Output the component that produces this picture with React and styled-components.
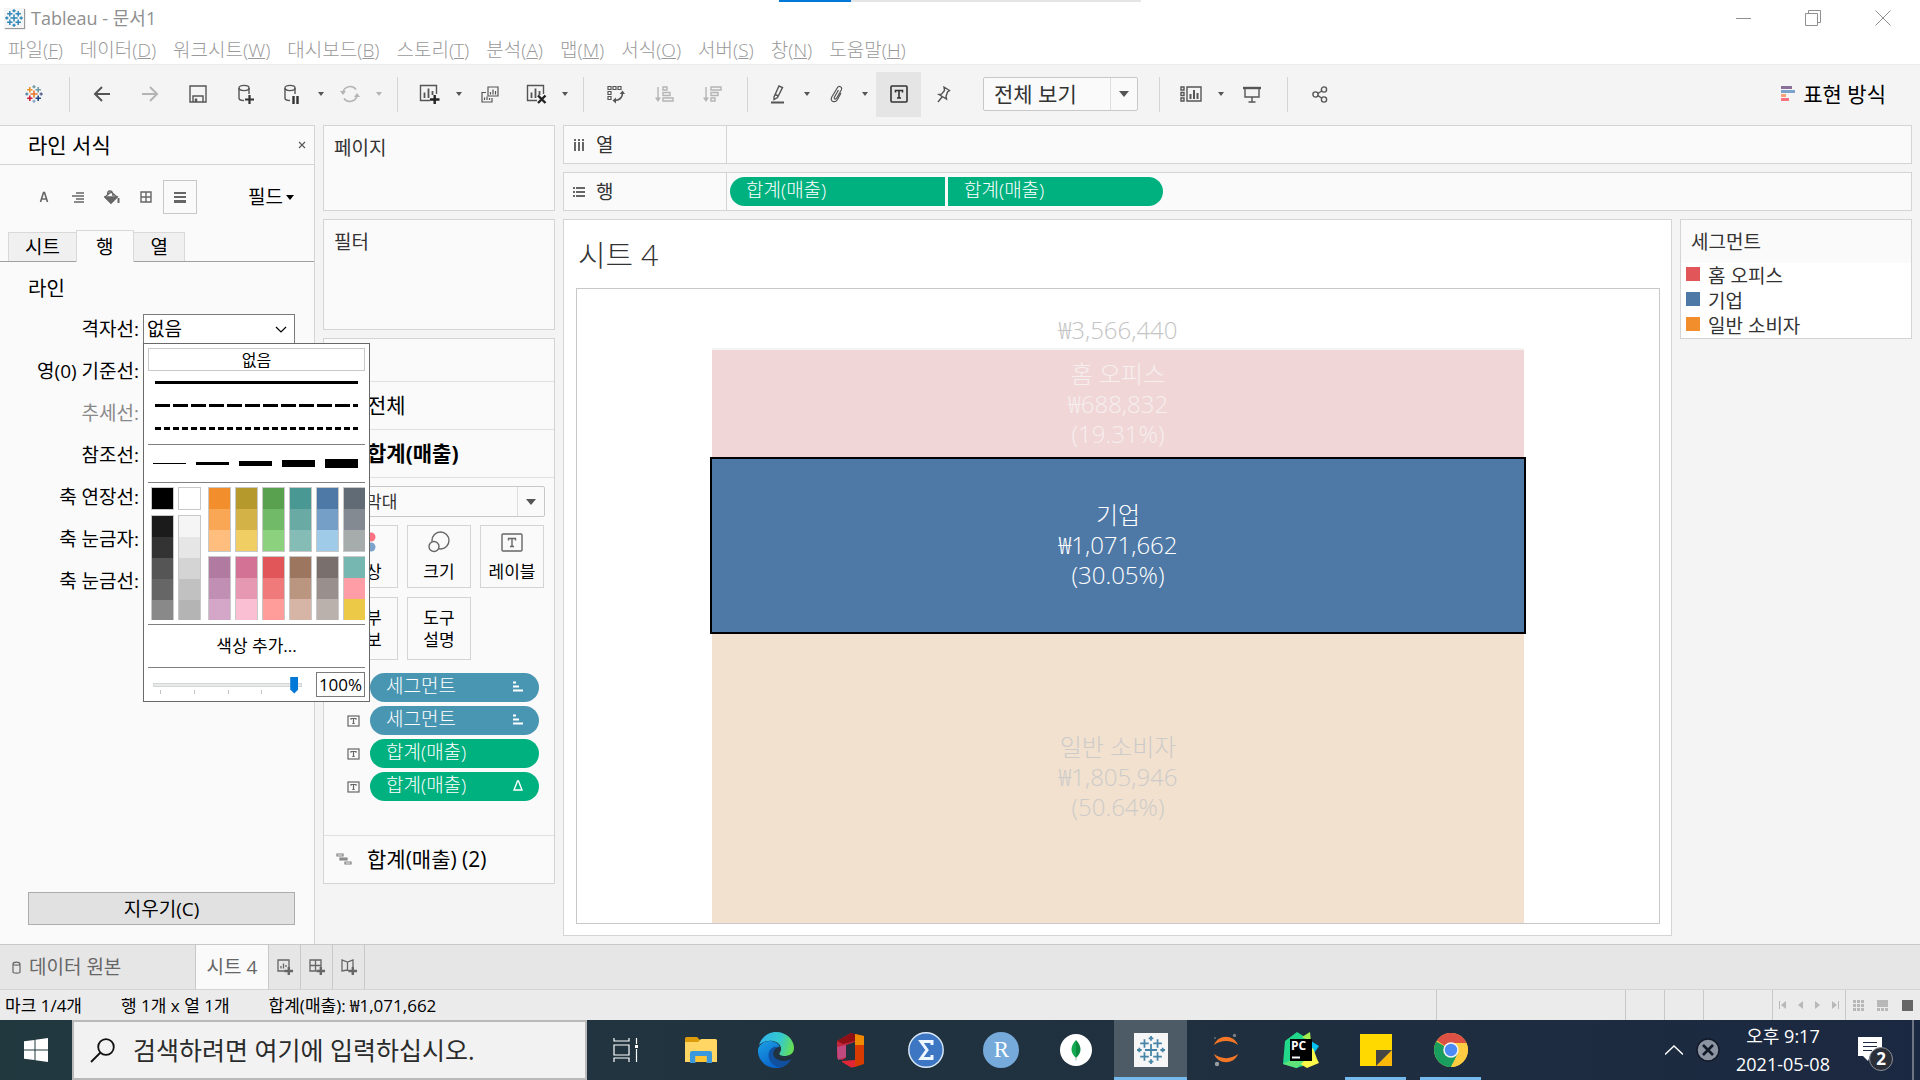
import React from 'react'
import styled, { createGlobalStyle, css } from 'styled-components'

const colors = {
    chrome: '#f4f4f4',
    card: '#fafafa',
    line: '#d4d4d4',
    icon: '#666666',
    faint: '#b4b4b4',
    green: '#00b180',
    blue: '#4996b2',
}

const GlobalStyle = createGlobalStyle`
    * {
        box-sizing: border-box;
    }

    body {
        margin: 0;
        font-family: "Open Sans", "Noto Sans CJK KR", sans-serif;
        font-size: 19px;
        line-height: 24px;
        color: #000;
        background: ${colors.chrome};
    }

    button, input, select {
        margin: 0;
        padding: 0;
        border: 0;
        border-radius: 0;
        background: none;
        color: inherit;
        font: inherit;
    }

    svg {
        display: block;
        flex: none;
    }
`

const Window = styled.div`
    display: flex;
    flex-direction: column;
    min-height: 100vh;
`

/* ---------- title and menu ---------- */

const TitleBar = styled.header`
    position: relative;
    display: flex;
    align-items: center;
    height: 36px;
    padding: 0 2px 0 4px;
    background: #fff;
    color: #8f8f8f;
    font-size: 18px;
`

const TitleIcon = styled.span`
    display: grid;
    place-items: center;
    width: 20px;
    height: 20px;
    margin-right: 7px;
    background: #f5f5f5;
    box-shadow: 1px 1px 1px #999;
`

const WindowButtons = styled.div`
    display: flex;
    margin-left: auto;
`

const WindowButton = styled.button`
    display: grid;
    place-items: center;
    width: 70px;
    height: 33px;
`

const Loading = styled.div`
    position: absolute;
    top: 0;
    left: 779px;
    width: 362px;
    height: 2px;
    background: linear-gradient(to right, #0078d7 72px, #e5e5e5 72px);
`

const MenuBar = styled.nav`
    display: flex;
    align-items: center;
    gap: 17px;
    height: 28px;
    padding: 0 8px;
    background: #fff;
    color: #999;
    font-size: 19px;
    white-space: nowrap;
`

const MenuItem = styled.button`
    font-weight: 300;
`

/* ---------- toolbar ---------- */

const Toolbar = styled.div`
    display: flex;
    align-items: center;
    height: 61px;
    padding: 0 34px 2px 10px;
    border-top: 1px solid #ececec;
    background: ${colors.chrome};
`

const Tool = styled.button`
    display: grid;
    place-items: center;
    flex: none;
    width: ${props => props.$w || 48}px;
    height: 45px;
    margin-left: ${props => props.$gap || 0}px;
    background: ${props => props.$active ? '#e5e5e5' : 'none'};
    color: ${props => props.$off ? colors.faint : '#555'};
`

const Divider = styled.span`
    flex: none;
    width: 1px;
    height: 35px;
    margin: 0 8px 0 ${props => props.$gap || 11}px;
    background: ${colors.line};
`

const ShowMe = styled.button`
    display: flex;
    align-items: center;
    gap: 8px;
    margin-left: auto;
    font-size: 21px;
`

const SelectBox = styled.div`
    display: grid;
    grid-template-columns: 1fr 27px;
    width: ${props => props.$w};
    height: ${props => props.$h}px;
    margin-left: ${props => props.$gap || 0}px;
    border: 1px solid #c8c8c8;
    border-radius: 2px;
    background: ${colors.card};
`

const Select = styled.select`
    grid-area: 1 / 1 / 2 / 3;
    appearance: none;
    width: 100%;
    height: 100%;
    padding-left: ${props => props.$pad}px;
    outline: none;
    color: ${props => props.$dark ? '#000' : '#333'};
    font-size: ${props => props.$size}px;
`

const SelectArrow = styled.span`
    grid-area: 1 / 2 / 2 / 3;
    display: grid;
    place-items: center;
    border-left: 1px solid ${props => props.$plain ? 'transparent' : '#dedede'};
    pointer-events: none;
`

/* ---------- workspace ---------- */

const Workspace = styled.div`
    display: flex;
    flex: 1;
    gap: 8px;
    padding-right: 8px;
`

const FormatPane = styled.aside`
    position: relative;
    z-index: 2;
    display: flex;
    flex-direction: column;
    flex: none;
    width: 315px;
    border-top: 1px solid ${colors.line};
    border-right: 1px solid ${colors.line};
    background: ${colors.card};
`

const PaneHeader = styled.div`
    display: flex;
    align-items: center;
    justify-content: space-between;
    height: 39px;
    padding: 0 6px 0 28px;
    border-bottom: 1px solid ${colors.line};
    font-size: 21px;
`

const FormatTools = styled.div`
    display: flex;
    align-items: center;
    padding: 15px 20px 16px 27px;
`

const FormatTool = styled.button`
    display: grid;
    place-items: center;
    width: 34px;
    height: 34px;
    border: 1px solid ${props => props.$active ? '#c8c8c8' : 'transparent'};
    color: ${colors.icon};
`

const FieldButton = styled.button`
    display: flex;
    align-items: center;
    gap: 3px;
    margin-left: auto;
    font-size: 19px;
`

const Tabs = styled.div`
    display: flex;
    align-items: flex-end;
    height: 32px;
    padding-left: 8px;
    border-bottom: 1px solid #a0a0a0;
`

const Tab = styled.button`
    height: 29px;
    padding: 0 16px;
    border: 1px solid #d9d9d9;
    border-bottom: 0;
    border-left-width: ${props => props.$last ? 0 : 1}px;
    background: #f0f0f0;

    ${props => props.$active && css`
        height: 32px;
        margin: 0 0 -1px -1px;
        padding: 0 20px 0 19px;
        background: ${colors.card};
    `}
`

const SectionTitle = styled.h2`
    margin: 15px 0 7px 28px;
    font-size: 20px;
    font-weight: 400;
    line-height: 24px;
`

const FormatRow = styled.div`
    display: grid;
    grid-template-columns: 139px 152px;
    align-items: center;
    gap: 4px;
    height: 42px;
    text-align: right;
    color: ${props => props.$off ? '#8a8a8a' : '#000'};
`

const Combo = styled.div`
    position: relative;

    ${SelectBox} {
        border-color: #7a7a7a;
        border-radius: 0;
        background: #fff;
    }
`

const ClearButton = styled.button`
    height: 33px;
    margin: auto 19px 19px 28px;
    border: 1px solid #adadad;
    background: #e1e1e1;
    font-size: 19px;
`

/* ---------- line popup ---------- */

const Popup = styled.div`
    position: absolute;
    top: 29px;
    left: 0;
    width: 227px;
    padding: 4px;
    border: 1px solid #696969;
    background: #fff;
    color: #000;
    text-align: center;
    font-size: 17px;
`

const NoneOption = styled.button`
    display: block;
    width: 100%;
    height: 23px;
    border: 1px solid #c8c8c8;
    font-size: 16px;
    line-height: 20px;
`

const LineOption = styled.button`
    display: block;
    width: 100%;
    height: 23px;
    padding: 0 7px;

    &::before {
        content: '';
        display: block;
        height: 3px;
        background: repeating-linear-gradient(to right, #000 0 ${props => props.$dash}px, #fff ${props => props.$dash}px ${props => props.$period}px);
    }
`

const Rule = styled.hr`
    height: 1px;
    margin: ${props => props.$gap || 0}px 0 0;
    border: 0;
    background: #808080;
`

const Widths = styled.div`
    display: flex;
    align-items: center;
    gap: 10px;
    height: 37px;
    padding: 0 5px;
`

const WidthOption = styled.button`
    width: 33px;
    height: ${props => props.$size}px;
    background: #000;
`

const Palette = styled.div`
    display: flex;
    gap: 4px;
    height: 133px;
    margin: 4px 0;
    padding-left: 3px;
    overflow: hidden;
`

const PaletteColumn = styled.div`
    display: flex;
    flex: none;
    flex-direction: column;
    gap: ${props => props.$gray ? 5 : 4}px;
    margin-left: ${props => props.$apart ? 3 : 0}px;
`

const Ramp = styled.div`
    width: 23px;
    border: 1px solid #c8c8c8;
`

const Swatch = styled.button`
    display: block;
    width: 100%;
    height: 21px;
    background: ${props => props.$color};
`

const MoreColors = styled.button`
    width: 100%;
    height: 42px;
`

const OpacityRow = styled.div`
    display: flex;
    justify-content: space-between;
    height: 29px;
    padding: 4px 0 0 5px;
`

const Opacity = styled.input`
    appearance: none;
    display: block;
    width: 149px;
    height: 17px;
    margin-top: 4px;

    &::-webkit-slider-runnable-track {
        height: 4px;
        border: 1px solid #d6d6d6;
        background: #e7eaea;
    }

    &::-webkit-slider-thumb {
        appearance: none;
        width: 8px;
        height: 17px;
        margin-top: -7px;
        background: #0078d7;
        clip-path: polygon(0 0, 100% 0, 100% 76%, 50% 100%, 0 76%);
    }
`

const Ticks = styled.div`
    display: flex;
    justify-content: space-between;
    width: 136px;
    height: 4px;
    margin: -3px 0 0 7px;

    span {
        width: 1px;
        background: #c4c4c4;
    }

    span:last-child {
        background: none;
    }
`

const Percent = styled.input`
    width: 49px;
    height: 25px;
    border: 1px solid #7a7a7a;
    text-align: center;
    font-size: 17px;
`

/* ---------- shelves and marks ---------- */

const Shelves = styled.div`
    display: flex;
    flex: none;
    flex-direction: column;
    gap: 8px;
    width: 232px;
`

const Card = styled.section`
    min-height: ${props => props.$h}px;
    padding: 10px;
    border: 1px solid ${colors.line};
    background: ${colors.card};
    color: #333;
    font-size: 19px;
`

const Marks = styled(Card)`
    display: flex;
    flex-direction: column;
    padding: 42px 0 0;
    color: #000;
`

const MarksRow = styled.button`
    display: flex;
    align-items: center;
    gap: 15px;
    width: 100%;
    height: 48px;
    padding: 0 0 2px ${props => props.$icon ? 12 : 43}px;
    border-top: 1px solid #e0e0e0;
    text-align: left;
    font-size: 21px;
    font-weight: ${props => props.$bold ? 700 : 400};
`

const MarksBody = styled.div`
    padding: 8px 9px 30px 10px;
    border-top: 1px solid #e0e0e0;
`

const MarkButtons = styled.div`
    display: grid;
    grid-template-columns: repeat(3, 64px);
    gap: 9px;
    margin: 8px 0 13px;
`

const MarkButton = styled.button`
    display: flex;
    flex-direction: column;
    align-items: center;
    justify-content: center;
    gap: 8px;
    height: 63px;
    border: 1px solid ${colors.line};
    font-size: 17px;
    line-height: 22px;
`

const MarkField = styled.div`
    display: flex;
    align-items: center;
    gap: 10px;
    margin: 0 6px 4px 13px;
`

const Pill = styled.button`
    display: flex;
    align-items: center;
    justify-content: space-between;
    flex: ${props => props.$w ? `0 0 ${props.$w}px` : 1};
    height: 29px;
    padding: 0 16px 3px;
    border-radius: ${props => props.$round || '15px'};
    background: ${props => props.$color};
    color: #fff;
    font-size: 19px;
    font-weight: 300;
`

/* ---------- view ---------- */

const Main = styled.main`
    display: flex;
    flex: 1;
    flex-direction: column;
    gap: 8px;
    padding-bottom: 8px;
`

const Shelf = styled.div`
    display: flex;
    height: 39px;
    border: 1px solid ${colors.line};
    background: ${colors.card};
`

const ShelfName = styled.div`
    display: flex;
    align-items: center;
    gap: 11px;
    width: 163px;
    padding-left: 9px;
    border-right: 1px solid ${colors.line};
    color: #333;
    font-size: 19px;
`

const ShelfFields = styled.div`
    display: flex;
    align-items: center;
    gap: 3px;
    padding-left: 3px;
`

const ViewRow = styled.div`
    display: flex;
    align-items: flex-start;
    flex: 1;
    gap: 8px;
`

const Sheet = styled.section`
    display: flex;
    flex: 1;
    flex-direction: column;
    align-self: stretch;
    padding: 17px 11px 11px 12px;
    border: 1px solid ${colors.line};
    background: #fff;
`

const SheetTitle = styled.h1`
    margin: 0 0 15px 2px;
    color: #333;
    font-size: 30px;
    font-weight: 300;
    line-height: 36px;
`

const Chart = styled.div`
    display: flex;
    flex: 1;
    flex-direction: column;
    align-items: center;
    border: 1px solid #c8c8c8;
    font-size: 24px;
    font-weight: 300;
    line-height: 30px;
    text-align: center;
`

const Total = styled.div`
    padding: 26px 0 3px;
    color: #c4c4c4;
`

const Bar = styled.div`
    display: flex;
    flex-direction: column;
    justify-content: center;
    flex-basis: 0;
    width: 75%;
    background: ${props => props.$fill};
    color: ${props => props.$text};
    outline: ${props => props.$selected ? '2px solid #000' : 'none'};
    z-index: ${props => props.$selected ? 1 : 0};
    box-shadow: ${props => props.$first ? 'inset 0 2px #f4f4f4' : 'none'};
`

const Legend = styled.section`
    width: 232px;
    border: 1px solid ${colors.line};
    background: #fff;
    color: #333;
    font-size: 19px;
`

const LegendTitle = styled.div`
    height: 43px;
    padding: 10px;
    background: ${colors.card};
`

const LegendItem = styled.div`
    display: flex;
    align-items: center;
    gap: 8px;
    height: 25px;
    padding-left: 5px;

    &::before {
        content: '';
        width: 14px;
        height: 14px;
        margin-bottom: 3px;
        background: ${props => props.$color};
    }
`

/* ---------- sheet tabs and status ---------- */

const SheetTabs = styled.div`
    display: flex;
    height: 45px;
    border-top: 1px solid #c8c8c8;
    background: #e6e6e6;
    color: #666;
`

const SheetTab = styled.button`
    display: flex;
    align-items: center;
    justify-content: ${props => props.$start ? 'flex-start' : 'center'};
    gap: 8px;
    width: ${props => props.$w}px;
    padding-left: ${props => props.$start ? 12 : 0}px;
    border-right: 1px solid #c8c8c8;
    background: ${props => props.$active ? colors.card : 'none'};
`

const StatusBar = styled.footer`
    display: flex;
    gap: 39px;
    height: 31px;
    padding-left: 5px;
    border-top: 1px solid ${colors.line};
    background: #ebebeb;
    font-size: 17px;
    line-height: 32px;
`

const StatusCells = styled.div`
    display: flex;
    margin-left: auto;
`

const StatusCell = styled.div`
    display: flex;
    align-items: center;
    justify-content: space-around;
    width: ${props => props.$w}px;
    border-left: 1px solid #c8c8c8;
`

/* ---------- taskbar ---------- */

const Taskbar = styled.div`
    display: flex;
    height: 60px;
    background: linear-gradient(to right, #22383f, #20303f 60%, #1b2841);
    color: #fff;
`

const Start = styled.button`
    display: grid;
    place-items: center;
    width: 72px;
`

const Search = styled.label`
    display: flex;
    align-items: center;
    gap: 18px;
    width: 515px;
    padding-left: 16px;
    border: 2px solid #bababa;
    background: #f2f2f2;

    input {
        flex: 1;
        min-width: 0;
        outline: none;
        font-size: 25px;
    }

    input::placeholder {
        color: #2b2b2b;
        opacity: 1;
    }
`

const TaskButton = styled.button`
    display: grid;
    place-items: center;
    width: 73px;
    margin-left: 2px;
    background: ${props => props.$active ? '#4d5b67' : 'none'};
    box-shadow: ${props => props.$active ? 'inset 0 -3px #76b9ed' : 'none'};

    ${props => props.$open && css`
        background: linear-gradient(#76b9ed, #76b9ed) center bottom / 61px 3px no-repeat;
    `}
`

const Tray = styled.div`
    display: flex;
    align-items: center;
    margin-left: auto;
`

const TrayButton = styled.button`
    display: grid;
    place-items: center;
    margin-right: ${props => props.$gap || 0}px;
`

const Clock = styled.div`
    width: 98px;
    text-align: center;
    font-size: 18px;
    line-height: 28px;
`

const ShowDesktop = styled.button`
    align-self: stretch;
    width: 8px;
    border-left: 2px solid #6c7484;
`

/* ---------- icons ---------- */

const Icon = ({ w, h, children, ...rest }) => (
    <svg width={w} height={h || w} viewBox={`0 0 ${w} ${h || w}`} fill="none" stroke="currentColor" strokeWidth="1.4" aria-hidden="true" {...rest}>
        {children}
    </svg>
)

const plus = (x, y, r) => `M${x - r} ${y}H${x + r}M${x} ${y - r}V${y + r}`

const TableauLogo = ({ size, tones, weight = 2 }) => (
    <svg width={size} height={size} viewBox="0 0 30 30" fill="none" strokeWidth={weight} aria-hidden="true">
        <path d={plus(15, 15, 6)} stroke={tones[0]} />
        <path d={plus(8, 8, 4.5)} stroke={tones[1]} />
        <path d={plus(22, 8, 4.5)} stroke={tones[2]} />
        <path d={plus(8, 22, 4.5)} stroke={tones[3]} />
        <path d={plus(22, 22, 4.5)} stroke={tones[4]} />
        <path d={plus(15, 3, 2.6)} stroke={tones[5]} />
        <path d={plus(15, 27, 2.6)} stroke={tones[6]} />
        <path d={plus(3, 15, 2.6)} stroke={tones[7]} />
        <path d={plus(27, 15, 2.6)} stroke={tones[8]} />
    </svg>
)

const Caret = ({ w = 6, h = 4, color = '#555' }) => (
    <svg width={w} height={h} viewBox="0 0 6 4" preserveAspectRatio="none" aria-hidden="true">
        <path d="M0 0H6L3 4Z" fill={color} />
    </svg>
)

const BackIcon = () => <Icon w={18} strokeWidth="2"><path d="M17 9H2M9 2L2 9L9 16" /></Icon>
const ForwardIcon = () => <Icon w={18} strokeWidth="2"><path d="M1 9H16M9 2L16 9L9 16" /></Icon>
const SaveIcon = () => (
    <Icon w={18}><path d="M1 1H17V17H1ZM4 17V11H14V17" /><path d="M7 13.5V17" strokeWidth="2.4" /></Icon>
)
const DatabaseIcon = ({ pause }) => (
    <Icon w={18} h={20}>
        <ellipse cx="7" cy="4" rx="5" ry="2.6" />
        <path d="M2 4V14C2 15.5 4 16.5 7 16.5M12 4V10" />
        {pause
            ? <path d="M10.5 12V20M14.5 12V20" stroke="#333" strokeWidth="2.4" />
            : <path d="M8 15.5H17M12.5 11V20" stroke="#333" strokeWidth="2.2" />}
    </Icon>
)
const RefreshIcon = () => (
    <Icon w={20}>
        <path d="M3 8A7.4 7.4 0 0 1 16 5.5M17 12A7.4 7.4 0 0 1 4 14.5" strokeWidth="1.6" />
        <path d="M0 7H6L3 11ZM14 13L17 9L20 13Z" fill="currentColor" stroke="none" />
    </Icon>
)
const SheetIcon = ({ mark }) => (
    <Icon w={21} h={20}>
        <path d="M11 16.5H1.5V1.5H17.5V10" />
        <path d="M5.5 14V8.5M9.5 14V4.5M13.5 11V7" strokeWidth="1.8" />
        {mark === 'x'
            ? <path d="M12 11.5L19.5 19M19.5 11.5L12 19" stroke="#222" strokeWidth="2.4" />
            : <path d="M11 15.5H20.5M15.7 11V20" stroke="#222" strokeWidth="2.4" />}
    </Icon>
)
const DuplicateIcon = () => (
    <Icon w={18} h={17} strokeWidth="1.2">
        <path d="M7 1H17V10H7ZM5 6.5H1V16H11V12" />
        <path d="M9.5 8.5V6M12 8.5V3.5M14.5 8.5V5M3.5 14V11.5M6 14V10.5M8.5 14V12" />
    </Icon>
)
const SwapIcon = () => (
    <Icon w={18} h={19}>
        <path d="M1 1.5H4V4.5H1ZM6 1.5H9V4.5H6ZM11 1.5H14V4.5H11ZM1 6.5H4V9.5H1ZM1 11.5H4V14.5H1Z" strokeWidth="1.2" />
        <path d="M15.5 8C15.5 12.5 12 15 8 15.5" strokeWidth="1.6" />
        <path d="M12.7 9L15.5 5.5L18 9ZM9 12.5L5.5 15.5L9 18.5Z" fill="currentColor" stroke="none" />
    </Icon>
)
const SortIcon = ({ desc }) => (
    <Icon w={19} h={17}>
        <path d="M3 1V13" />
        <path d="M0 11.5H6L3 16Z" fill="currentColor" stroke="none" />
        <path d={desc ? 'M8 1H18V4H8ZM8 6.5H15V9.5H8ZM8 12H12V15H8Z' : 'M8 1H12V4H8ZM8 6.5H15V9.5H8ZM8 12H18V15H8Z'} />
    </Icon>
)
const PenIcon = () => (
    <Icon w={14} h={20}>
        <path d="M3 13L8 2L11.5 3.5L6.5 13.5L3 15.5ZM4 10.5L7.5 12" />
        <path d="M0 18.5H13" strokeWidth="2" />
    </Icon>
)
const ClipIcon = () => (
    <Icon w={15} h={18} strokeWidth="1.2">
        <path d="M9.5 5L5.5 12C4.5 14 6.7 15 7.7 13L12.3 5C13.6 2 10 0 8.2 3L2.8 12C0.5 16.5 6 18.5 8.5 14.5L12 8" />
    </Icon>
)
const TextIcon = () => (
    <Icon w={18} strokeWidth="1.6" color="#333">
        <rect x="1" y="1" width="16" height="16" rx="1" />
        <path d="M5.5 7.5V5.5H12.5V7.5M9 5.5V13M7 13H11" />
    </Icon>
)
const PinIcon = () => (
    <Icon w={16} h={17}>
        <path d="M9 1L14.5 4.5L12.5 6L11 10.5L11.5 13L4 8.5L6.5 8.2L9.5 4.5ZM7 11L3 16" />
    </Icon>
)
const CardsIcon = () => (
    <Icon w={22} h={16}>
        <path d="M1 1H4V4H1ZM1 6.5H4V9.5H1ZM1 12H4V15H1ZM7 1H21V15H7Z" />
        <path d="M10.5 13V8M14 13V4M17.5 13V7" strokeWidth="2" />
    </Icon>
)
const PresentIcon = () => (
    <Icon w={18} h={17}><path d="M0 2H18" strokeWidth="2.4" /><path d="M2 3V11H16V3M9 11V16M5.5 16H12.5" /></Icon>
)
const ShareIcon = () => (
    <Icon w={16} h={17}>
        <circle cx="3.5" cy="8.5" r="2.6" /><circle cx="12" cy="3.5" r="2.6" /><circle cx="12" cy="13.5" r="2.6" />
        <path d="M6 7.5L9.6 5M6 9.7L9.6 12" />
    </Icon>
)
const SortMark = () => (
    <Icon w={10} h={11} strokeWidth="2"><path d="M0 1.5H3M0 5.5H6M0 9.5H10" /></Icon>
)
const AddTabIcon = ({ kind }) => (
    <Icon w={16} strokeWidth="1.3">
        {kind === 'sheet' && <path d="M8 12H1V1H12V8M4 9.5V7M6.5 9.5V4.5M9 8V6" />}
        {kind === 'dashboard' && <path d="M7.5 12H1V1H12V8M6.5 1V12M1 6.5H12" />}
        {kind === 'story' && <path d="M8 12L6.5 11L1 12V1L6.5 3L12 1V8M6.5 3V11" />}
        <path d="M7.5 12H16M11.8 8V16" strokeWidth="2.4" />
    </Icon>
)

/* taskbar artwork */

const ExplorerIcon = () => (
    <svg width="32" height="27" viewBox="0 0 32 27">
        <path d="M0 1.5Q0 0 1.5 0H12L15 3V6H0Z" fill="#dd9c0c" />
        <path d="M0 5H13L16 2H30.5Q32 2 32 3.5V25H0Z" fill="#ffd563" />
        <path d="M5 26V16Q5 14 7 14H25Q27 14 27 16V26H21.5V19H10.5V26Z" fill="#3a98dc" />
        <path d="M10.5 19H21.5V25H10.5Z" fill="#fcc534" />
    </svg>
)
const EdgeIcon = () => (
    <svg width="36" height="36" viewBox="0 0 36 36">
        <defs>
            <linearGradient id="edgeTop" x1="0" y1=".3" x2="1" y2=".5">
                <stop offset="0" stopColor="#2fb3ee" /><stop offset=".6" stopColor="#35c9cc" /><stop offset="1" stopColor="#66e052" />
            </linearGradient>
            <linearGradient id="edgeLow" x1="0" y1="0" x2=".6" y2="1">
                <stop offset="0" stopColor="#1aa0e6" /><stop offset="1" stopColor="#0a62c9" />
            </linearGradient>
        </defs>
        <path d="M1 13C4 4 11 0 18 0C29 0 36 8 36 16C36 22 31 24 26 24C22 24 20 22 22 20C25 15 21 10 15 9C9 8 4 10 1 13Z" fill="url(#edgeTop)" />
        <path d="M0 17C2 11 8 8 15 9.5C20 10.5 22 14 21.5 16C16 14 11 20 14 26C16 31 21 34 26 34C23 36 20 36 18 36C8 36 -1 28 0 17Z" fill="url(#edgeLow)" />
        <path d="M20 15C11 20 16 29 26 29C29 29 31 28 33 27C31 32 26 35 22 35.5C13 34 9 26 11 20C13 15 17 14 20 15Z" fill="#11509f" />
        <path d="M20 15C22 14 24 18 21.5 21C20 23 24 25 26 25C20 27 15 20 20 15Z" fill="#22343f" />
    </svg>
)
const OfficeIcon = () => (
    <svg width="28" height="36" viewBox="0 0 28 36">
        <path d="M0 9L14 1L18 2.5V10L9 13V26L5 28L0 26Z" fill="#c4263e" />
        <path d="M0 9L14 1L18 2.5V9L6 12Z" fill="#8e0f14" />
        <path d="M0 15L9 13V25L1 28Z" fill="#c04a80" />
        <path d="M18 2L27 4V32L18 35Z" fill="#d83b01" />
        <path d="M18 2L27 4V13H18Z" fill="#f08a00" />
        <path d="M5 29L18 28V35L14 35.5L5 30Z" fill="#e32636" />
    </svg>
)
const SigmaIcon = () => (
    <svg width="36" height="36" viewBox="0 0 36 36">
        <circle cx="18" cy="18" r="17.2" fill="#3d76c2" stroke="#dcebfa" strokeWidth="1.4" />
        <path d="M24 13V9.5H13L19 18L13 26.5H24V23" fill="none" stroke="#eef6ff" strokeWidth="3" />
    </svg>
)
const RIcon = () => (
    <svg width="36" height="36" viewBox="0 0 36 36">
        <circle cx="18" cy="18" r="18" fill="#75aadb" />
        <text x="18.5" y="25" textAnchor="middle" fill="#fff" fontFamily="Liberation Serif, serif" fontSize="23">R</text>
    </svg>
)
const MongoIcon = () => (
    <svg width="32" height="32" viewBox="0 0 32 32">
        <circle cx="16" cy="16" r="16" fill="#fff" />
        <path d="M16 6C9.5 13 10.5 19 16 24Z" fill="#13aa52" />
        <path d="M16 6C22.5 13 21.5 19 16 24Z" fill="#0b8a40" />
        <path d="M16 23V26.5" stroke="#b8c4c2" strokeWidth="1.2" />
    </svg>
)
const TableauTile = () => (
    <svg width="34" height="34" viewBox="0 0 34 34">
        <rect width="34" height="34" fill="#f6f6f6" />
        <g transform="translate(3 3) scale(.934)">
            <path
                d={[
                    plus(15, 15, 6.5), plus(8, 8, 4.6), plus(22, 8, 4.6), plus(8, 22, 4.6), plus(22, 22, 4.6),
                    plus(15, 2.5, 2.5), plus(15, 27.5, 2.5), plus(2.5, 15, 2.5), plus(27.5, 15, 2.5),
                ].join('')}
                stroke="#4684a8"
                strokeWidth="1.9"
            />
        </g>
    </svg>
)
const JupyterIcon = () => (
    <svg width="26" height="34" viewBox="0 0 26 34">
        <path d="M1 12C5 1 21 1 25 12C18 6.5 8 6.5 1 12ZM1 21C5 32 21 32 25 21C18 26.5 8 26.5 1 21Z" fill="#f37726" />
        <circle cx="21.5" cy="2.5" r="1.7" fill="#777d82" />
        <circle cx="4" cy="31" r="2.2" fill="#989da1" />
        <circle cx="2" cy="5" r="1" fill="#6a7075" />
    </svg>
)
const PyCharmIcon = () => (
    <svg width="36" height="36" viewBox="0 0 36 36">
        <path d="M2 9L14 0L22 5L20 34L13 36L0 32Z" fill="#21d789" />
        <path d="M19 5L27 0L28 10Z" fill="#a6ee4d" />
        <path d="M28 9L36 14L29 24Z" fill="#07c3f2" />
        <path d="M30 16L34 27L36 31L24 36L12 29Z" fill="#fcf84a" />
        <path d="M0 32L8 28H22L14 36Z" fill="#5fe27a" />
        <rect x="7" y="7" width="22" height="22" fill="#000" />
        <text x="8" y="18" fill="#fff" fontFamily="Open Sans, sans-serif" fontWeight="700" fontSize="12">PC</text>
        <path d="M9 25.5H17" stroke="#fff" strokeWidth="2" />
    </svg>
)
const StickyIcon = () => (
    <svg width="32" height="32" viewBox="0 0 32 32">
        <path d="M0 0H32V32H0Z" fill="#ffd900" />
        <path d="M16 32L32 16V32Z" fill="#fcb90a" />
        <path d="M16 16H32L16 32Z" fill="#454545" />
    </svg>
)
const ChromeIcon = () => (
    <svg width="34" height="34" viewBox="0 0 34 34">
        <circle cx="17" cy="17" r="17" fill="#ffcd42" />
        <path d="M17 17L2.3 8.5A17 17 0 0 0 17 34L24 20Z" fill="#1a9e5f" />
        <path d="M17 17L2.8 7.6A17 17 0 0 1 32.5 10H17L9 20Z" fill="#dd5044" />
        <path d="M24 21L17 34A17 17 0 0 0 32.5 10H17Z" fill="#ffcd42" />
        <circle cx="17" cy="17" r="7.7" fill="#f4f4f4" />
        <circle cx="17" cy="17" r="6.2" fill="#4c8bf5" />
    </svg>
)

/* ---------- data ---------- */

const menus = [
    ['파일', 'F'], ['데이터', 'D'], ['워크시트', 'W'], ['대시보드', 'B'], ['스토리', 'T'], ['분석', 'A'],
    ['맵', 'M'], ['서식', 'O'], ['서버', 'S'], ['창', 'N'], ['도움말', 'H'],
]

const formatRows = [
    { label: '영(0) 기준선:' },
    { label: '추세선:', off: true },
    { label: '참조선:' },
    { label: '축 연장선:' },
    { label: '축 눈금자:' },
    { label: '축 눈금선:' },
]

const grays = [
    [['#000000'], ['#1b1b1b', '#333333', '#555555', '#666666', '#898989']],
    [['#ffffff'], ['#f5f5f5', '#e6e6e6', '#d4d4d4', '#c1c1c1', '#b4b4b4']],
]

const ramps = [
    [['#f28e2b', '#f9a655', '#ffbe7d'], ['#b07aa1', '#c28fb4', '#d4a6c8']],
    [['#b6992d', '#d3b248', '#f1ce63'], ['#d37295', '#e697b2', '#fabfd2']],
    [['#59a14f', '#71ba67', '#8cd17d'], ['#e15759', '#f07a79', '#ff9d9a']],
    [['#499894', '#69aaa5', '#86bcb6'], ['#9d7660', '#ba9580', '#d7b5a6']],
    [['#4e79a7', '#769fc7', '#a0cbe8'], ['#79706e', '#998f8c', '#bab0ac']],
    [['#616b76', '#838a91', '#a5acab'], ['#76b7b2', '#ff9da7', '#edc948']],
]

const segments = [
    { name: '홈 오피스', value: 688832, amount: '₩688,832', share: '(19.31%)', color: '#e15759', fill: '#f1d6d8', text: '#f5efee' },
    { name: '기업', value: 1071662, amount: '₩1,071,662', share: '(30.05%)', color: '#4e79a7', fill: '#4e79a7', text: '#ffffff', selected: true },
    { name: '일반 소비자', value: 1805946, amount: '₩1,805,946', share: '(50.64%)', color: '#f28e2b', fill: '#f2e1cf', text: '#cdcbc9' },
]

const logoTones = ['#e8762c', '#eb9129', '#7099a6', '#c72037', '#1f457e', '#7099a6', '#8aa7cb', '#5c8aa8', '#5b6591']
const blueTones = Array(9).fill('#2e86b8')

/* ---------- parts ---------- */

const LinePopup = () => (
    <Popup>
        <NoneOption>없음</NoneOption>
        <LineOption $dash={18} $period={18} aria-label="실선" />
        <LineOption $dash={15} $period={18} aria-label="파선" />
        <LineOption $dash={6} $period={9} aria-label="점선" />
        <Rule $gap={4} />
        <Widths>
            {[1, 3, 5, 7, 9].map(size => <WidthOption key={size} $size={size} aria-label={`${size}px`} />)}
        </Widths>
        <Rule />
        <Palette>
            {grays.map((column, i) => (
                <PaletteColumn key={i} $gray>
                    {column.map((ramp, j) => (
                        <Ramp key={j}>{ramp.map(color => <Swatch key={color} $color={color} aria-label={color} />)}</Ramp>
                    ))}
                </PaletteColumn>
            ))}
            {ramps.map((column, i) => (
                <PaletteColumn key={i} $apart={i === 0}>
                    {column.map((ramp, j) => (
                        <Ramp key={j}>{ramp.map(color => <Swatch key={color} $color={color} aria-label={color} />)}</Ramp>
                    ))}
                </PaletteColumn>
            ))}
        </Palette>
        <Rule />
        <MoreColors>색상 추가...</MoreColors>
        <Rule />
        <OpacityRow>
            <div>
                <Opacity type="range" min="0" max="100" defaultValue="98" aria-label="불투명도" />
                <Ticks><span /><span /><span /><span /><span /></Ticks>
            </div>
            <Percent type="text" defaultValue="100%" aria-label="불투명도 값" />
        </OpacityRow>
    </Popup>
)

const FormatPanel = () => (
    <FormatPane>
        <PaneHeader>
            <span>라인 서식</span>
            <button aria-label="닫기"><Icon w={12} strokeWidth="1.1" color="#555"><path d="M3 3L9 9M9 3L3 9" /></Icon></button>
        </PaneHeader>
        <FormatTools>
            <FormatTool aria-label="글꼴"><Icon w={10} h={12} strokeWidth="1.6"><path d="M1.5 11L4.5 1.5H5.5L8.5 11M3 8H7" /></Icon></FormatTool>
            <FormatTool aria-label="맞춤"><Icon w={12} h={11}><path d="M4 1H12M0 4H12M4 7H12M2 10H12" /></Icon></FormatTool>
            <FormatTool aria-label="음영">
                <Icon w={16} h={14}>
                    <path d="M1 7L7 2L13 7L7 13ZM4 5C2 0 9 -1 9 6" />
                    <path d="M1 7H13L7 13Z" fill="currentColor" />
                    <path d="M14.5 8V13" strokeWidth="2" />
                </Icon>
            </FormatTool>
            <FormatTool aria-label="테두리"><Icon w={12}><path d="M1 1H11V11H1ZM6 1V11M1 6H11" /></Icon></FormatTool>
            <FormatTool $active aria-label="라인">
                <Icon w={12} h={11} strokeWidth="2"><path d="M0 1H12M0 5H12" /><path d="M0 9.5H12" strokeWidth="3" /></Icon>
            </FormatTool>
            <FieldButton>필드<Caret w={8} h={5} color="#000" /></FieldButton>
        </FormatTools>
        <Tabs>
            <Tab>시트</Tab>
            <Tab $active>행</Tab>
            <Tab $last>열</Tab>
        </Tabs>
        <SectionTitle>라인</SectionTitle>
        <FormatRow>
            <label htmlFor="gridline">격자선:</label>
            <Combo>
                <SelectBox $w="100%" $h={30}>
                    <Select id="gridline" $pad={3} $size={19} $dark><option>없음</option></Select>
                    <SelectArrow $plain><Icon w={12} h={7} strokeWidth="1.2"><path d="M1 1L6 6L11 1" /></Icon></SelectArrow>
                </SelectBox>
                <LinePopup />
            </Combo>
        </FormatRow>
        {formatRows.map(row => (
            <FormatRow key={row.label} $off={row.off}><span>{row.label}</span></FormatRow>
        ))}
        <ClearButton>지우기(C)</ClearButton>
    </FormatPane>
)

const MarksCard = () => (
    <Marks>
        <MarksRow>전체</MarksRow>
        <MarksRow $bold>합계(매출)</MarksRow>
        <MarksBody>
            <SelectBox $w="100%" $h={31}>
                <Select $pad={31} $size={17} aria-label="마크 유형"><option>막대</option></Select>
                <SelectArrow><Caret w={10} h={6} /></SelectArrow>
            </SelectBox>
            <MarkButtons>
                <MarkButton>
                    <svg width="22" height="22" viewBox="0 0 22 22">
                        <circle cx="6" cy="6" r="4.5" fill="#f9a655" /><circle cx="16" cy="6" r="4.5" fill="#fc7280" />
                        <circle cx="6" cy="16" r="4.5" fill="#8b6f9b" /><circle cx="16" cy="16" r="4.5" fill="#7ba3cc" />
                    </svg>
                    색상
                </MarkButton>
                <MarkButton>
                    <Icon w={22} color={colors.icon}><circle cx="12.5" cy="9.5" r="8.5" /><circle cx="6" cy="15.5" r="5" fill={colors.card} /></Icon>
                    크기
                </MarkButton>
                <MarkButton>
                    <Icon w={22} color={colors.icon}>
                        <rect x="1" y="3" width="20" height="17" rx="1" />
                        <path d="M7.5 9.5V7.5H14.5V9.5M11 7.5V15.5M9 15.5H13" />
                    </Icon>
                    레이블
                </MarkButton>
                <MarkButton><span>세부<br />정보</span></MarkButton>
                <MarkButton><span>도구<br />설명</span></MarkButton>
            </MarkButtons>
            {['세그먼트', '세그먼트', '합계(매출)', '합계(매출)'].map((name, i) => (
                <MarkField key={i}>
                    <Icon w={13} h={12} color={colors.icon} strokeWidth="1.2">
                        <rect x="1" y="1" width="11" height="10" />
                        <path d="M4 4.8V3.5H9V4.8M6.5 3.5V8.5M5.3 8.5H7.7" />
                    </Icon>
                    <Pill $color={i < 2 ? colors.blue : colors.green}>
                        {name}
                        {i < 2 && <SortMark />}
                        {i === 3 && <Icon w={10} h={11}><path d="M1 10H9L5.5 1H4.5Z" /></Icon>}
                    </Pill>
                </MarkField>
            ))}
        </MarksBody>
        <MarksRow $icon>
            <Icon w={16} h={12} color="#808080" strokeWidth="1.2">
                <path d="M1 1H7V3H1ZM9 9H15V11H9Z" /><path d="M4 5H11V7H4Z" fill="#999" />
            </Icon>
            합계(매출) (2)
        </MarksRow>
    </Marks>
)

const ChartView = () => (
    <Sheet>
        <SheetTitle>시트 4</SheetTitle>
        <Chart>
            <Total>₩3,566,440</Total>
            {segments.map((s, i) => (
                <Bar key={s.name} $fill={s.fill} $text={s.text} $selected={s.selected} $first={i === 0} style={{ flexGrow: s.value }}>
                    <span>{s.name}</span>
                    <span>{s.amount}</span>
                    <span>{s.share}</span>
                </Bar>
            ))}
        </Chart>
    </Sheet>
)

const ToolbarRow = () => (
    <Toolbar>
        <Tool aria-label="시작 페이지"><TableauLogo size={18} tones={logoTones} weight={2.6} /></Tool>
        <Divider />
        <Tool aria-label="실행 취소"><BackIcon /></Tool>
        <Tool $off aria-label="다시 실행"><ForwardIcon /></Tool>
        <Tool aria-label="저장"><SaveIcon /></Tool>
        <Tool aria-label="새 데이터 원본"><DatabaseIcon /></Tool>
        <Tool $w={44} aria-label="자동 업데이트 일시 중지"><DatabaseIcon pause /></Tool>
        <Tool $w={14} aria-label="업데이트 옵션"><Caret /></Tool>
        <Tool $w={44} $off aria-label="업데이트 실행"><RefreshIcon /></Tool>
        <Tool $w={14} aria-label="실행 옵션"><Caret color="#b4b4b4" /></Tool>
        <Divider />
        <Tool $w={46} aria-label="새 워크시트"><SheetIcon /></Tool>
        <Tool $w={14} aria-label="새로 만들기 옵션"><Caret /></Tool>
        <Tool aria-label="복제"><DuplicateIcon /></Tool>
        <Tool $w={44} aria-label="시트 지우기"><SheetIcon mark="x" /></Tool>
        <Tool $w={14} aria-label="지우기 옵션"><Caret /></Tool>
        <Divider />
        <Tool aria-label="행과 열 바꾸기"><SwapIcon /></Tool>
        <Tool $off aria-label="오름차순 정렬"><SortIcon /></Tool>
        <Tool $off aria-label="내림차순 정렬"><SortIcon desc /></Tool>
        <Divider />
        <Tool $w={44} aria-label="하이라이트"><PenIcon /></Tool>
        <Tool $w={14} aria-label="하이라이트 옵션"><Caret /></Tool>
        <Tool $w={44} aria-label="그룹"><ClipIcon /></Tool>
        <Tool $w={14} aria-label="그룹 옵션"><Caret /></Tool>
        <Tool $w={45} $gap={4} $active aria-label="마크 레이블 표시"><TextIcon /></Tool>
        <Tool $w={44} aria-label="축 고정"><PinIcon /></Tool>
        <SelectBox $w="155px" $h={34} $gap={18}>
            <Select $pad={10} $size={21} aria-label="맞춤"><option>전체 보기</option></Select>
            <SelectArrow><Caret w={10} h={6} /></SelectArrow>
        </SelectBox>
        <Divider $gap={21} />
        <Tool $w={46} aria-label="카드 표시"><CardsIcon /></Tool>
        <Tool $w={14} aria-label="카드 옵션"><Caret /></Tool>
        <Tool aria-label="프레젠테이션 모드"><PresentIcon /></Tool>
        <Divider />
        <Tool aria-label="공유"><ShareIcon /></Tool>
        <ShowMe>
            <Icon w={14} h={16} stroke="none">
                <path d="M0 0H11V3H0Z" fill="#8b6f9b" /><path d="M0 4H14V7H0Z" fill="#7ba3cc" />
                <path d="M0 8H5V11H0Z" fill="#faa275" /><path d="M0 12H8V15H0Z" fill="#fc7280" />
            </Icon>
            표현 방식
        </ShowMe>
    </Toolbar>
)

const Status = () => (
    <StatusBar>
        <span>마크 1/4개</span>
        <span>행 1개 x 열 1개</span>
        <span>합계(매출): ₩1,071,662</span>
        <StatusCells>
            <StatusCell $w={189} />
            <StatusCell $w={39} />
            <StatusCell $w={39} />
            <StatusCell $w={69} />
            <StatusCell $w={73}>
                <Icon w={7} h={8} fill="#b8b8b8" stroke="none"><path d="M0 0H1V8H0ZM7 0V8L2 4Z" /></Icon>
                <Icon w={5} h={8} fill="#b8b8b8" stroke="none"><path d="M5 0V8L0 4Z" /></Icon>
                <Icon w={5} h={8} fill="#b8b8b8" stroke="none"><path d="M0 0V8L5 4Z" /></Icon>
                <Icon w={7} h={8} fill="#b8b8b8" stroke="none"><path d="M6 0H7V8H6ZM0 0V8L5 4Z" /></Icon>
            </StatusCell>
            <StatusCell $w={75}>
                <Icon w={11} fill="#b8b8b8" stroke="none"><path d="M0 0h3v3h-3zM4 0h3v3h-3zM8 0h3v3h-3zM0 4h3v3h-3zM4 4h3v3h-3zM8 4h3v3h-3zM0 8h3v3h-3zM4 8h3v3h-3zM8 8h3v3h-3z" /></Icon>
                <Icon w={11} fill="#b8b8b8" stroke="none"><path d="M0 0h11v7h-11zM0 8h3v3h-3zM4 8h3v3h-3zM8 8h3v3h-3z" /></Icon>
                <Icon w={11} fill="#666" stroke="none"><path d="M0 0h11v11h-11z" /></Icon>
            </StatusCell>
        </StatusCells>
    </StatusBar>
)

const WindowsTaskbar = () => (
    <Taskbar>
        <Start aria-label="시작">
            <svg width="24" height="24" viewBox="0 0 24 24" fill="#fff"><path d="M0 3.3L10.5 2V11.5H0ZM11.5 1.8L24 0V11.5H11.5ZM0 12.5H10.5V22L0 20.7ZM11.5 12.5H24V24L11.5 22.2Z" /></svg>
        </Start>
        <Search>
            <Icon w={25} color="#111" strokeWidth="1.8"><circle cx="16" cy="9" r="7.8" /><path d="M10.5 14.5L1 24" /></Icon>
            <input type="search" placeholder="검색하려면 여기에 입력하십시오." aria-label="검색" />
        </Search>
        <TaskButton aria-label="작업 보기">
            <Icon w={26} h={24} color="#fff" strokeWidth="1.2">
                <path d="M1 0V3H16V0M1 7H16V17H1ZM1 24V20H16V24M23.5 0V6M23.5 11V24" />
                <path d="M22 7H25V10H22Z" fill="#fff" stroke="none" />
            </Icon>
        </TaskButton>
        <TaskButton aria-label="파일 탐색기"><ExplorerIcon /></TaskButton>
        <TaskButton aria-label="Edge"><EdgeIcon /></TaskButton>
        <TaskButton aria-label="Office"><OfficeIcon /></TaskButton>
        <TaskButton aria-label="SPSS"><SigmaIcon /></TaskButton>
        <TaskButton aria-label="RStudio"><RIcon /></TaskButton>
        <TaskButton aria-label="MongoDB"><MongoIcon /></TaskButton>
        <TaskButton $active aria-label="Tableau"><TableauTile /></TaskButton>
        <TaskButton aria-label="Jupyter"><JupyterIcon /></TaskButton>
        <TaskButton aria-label="PyCharm"><PyCharmIcon /></TaskButton>
        <TaskButton $open aria-label="스티커 메모"><StickyIcon /></TaskButton>
        <TaskButton $open aria-label="Chrome"><ChromeIcon /></TaskButton>
        <Tray>
            <TrayButton $gap={13} aria-label="숨겨진 아이콘 표시"><Icon w={18} h={10}><path d="M0 9.5L9 1L18 9.5" /></Icon></TrayButton>
            <TrayButton $gap={14} aria-label="연결 안 됨">
                <svg width="24" height="24" viewBox="0 0 24 24">
                    <circle cx="12" cy="12" r="11" fill="#8d94a1" stroke="#111827" strokeWidth="1.4" />
                    <path d="M7 7L17 17M17 7L7 17" stroke="#111827" strokeWidth="2.6" />
                </svg>
            </TrayButton>
            <Clock>오후 9:17<br />2021-05-08</Clock>
            <TrayButton $gap={18} aria-label="알림">
                <svg width="62" height="42" viewBox="0 0 62 42">
                    <path d="M26 8H50V27H38L36 32L31 27H26Z" fill="#fff" />
                    <path d="M31 13.5H45M31 17.5H45M31 21.5H40" stroke="#1c2940" strokeWidth="1.2" />
                    <circle cx="49" cy="30" r="11.5" fill="#2b2f38" stroke="#8b909a" />
                    <text x="49" y="36" textAnchor="middle" fill="#fff" fontFamily="Open Sans, sans-serif" fontWeight="700" fontSize="17">2</text>
                </svg>
            </TrayButton>
            <ShowDesktop aria-label="바탕 화면 보기" />
        </Tray>
    </Taskbar>
)

const App = () => (
    <Window>
        <GlobalStyle />
        <TitleBar>
            <Loading />
            <TitleIcon><TableauLogo size={18} tones={blueTones} weight={2.4} /></TitleIcon>
            Tableau - 문서1
            <WindowButtons>
                <WindowButton aria-label="최소화"><Icon w={15} strokeWidth="1"><path d="M0 7.5H15" /></Icon></WindowButton>
                <WindowButton aria-label="이전 크기로"><Icon w={16} strokeWidth="1"><path d="M.5 3.5H12.5V15.5H.5ZM3.5 3V.5H15.5V12.5H13" /></Icon></WindowButton>
                <WindowButton aria-label="닫기"><Icon w={16} strokeWidth="1"><path d="M.5 .5L15.5 15.5M15.5 .5L.5 15.5" /></Icon></WindowButton>
            </WindowButtons>
        </TitleBar>
        <MenuBar>
            {menus.map(([name, key]) => <MenuItem key={key}>{name}(<u>{key}</u>)</MenuItem>)}
        </MenuBar>
        <ToolbarRow />
        <Workspace>
            <FormatPanel />
            <Shelves>
                <Card $h={86}>페이지</Card>
                <Card $h={111}>필터</Card>
                <MarksCard />
            </Shelves>
            <Main>
                <Shelf>
                    <ShelfName>
                        <Icon w={12} strokeWidth="2" color={colors.icon}><path d="M2 0V2M6 0V2M10 0V2M2 3V12M6 3V12M10 3V12" /></Icon>열
                    </ShelfName>
                </Shelf>
                <Shelf>
                    <ShelfName>
                        <Icon w={12} strokeWidth="2" color={colors.icon}><path d="M0 2H2M0 6H2M0 10H2M3 2H12M3 6H12M3 10H12" /></Icon>행
                    </ShelfName>
                    <ShelfFields>
                        <Pill $w={215} $color={colors.green} $round="15px 0 0 15px">합계(매출)</Pill>
                        <Pill $w={215} $color={colors.green} $round="0 15px 15px 0">합계(매출)</Pill>
                    </ShelfFields>
                </Shelf>
                <ViewRow>
                    <ChartView />
                    <Legend>
                        <LegendTitle>세그먼트</LegendTitle>
                        {segments.map(s => <LegendItem key={s.name} $color={s.color}>{s.name}</LegendItem>)}
                    </Legend>
                </ViewRow>
            </Main>
        </Workspace>
        <SheetTabs>
            <SheetTab $w={196} $start>
                <Icon w={9} h={13} strokeWidth="1.2"><path d="M1 3V11C1 12.5 8 12.5 8 11V3C8 .5 1 .5 1 3C1 4.5 8 4.5 8 3" /></Icon>
                데이터 원본
            </SheetTab>
            <SheetTab $w={73} $active>시트 4</SheetTab>
            <SheetTab $w={32} aria-label="새 워크시트"><AddTabIcon kind="sheet" /></SheetTab>
            <SheetTab $w={32} aria-label="새 대시보드"><AddTabIcon kind="dashboard" /></SheetTab>
            <SheetTab $w={32} aria-label="새 스토리"><AddTabIcon kind="story" /></SheetTab>
        </SheetTabs>
        <Status />
        <WindowsTaskbar />
    </Window>
)

export default App
